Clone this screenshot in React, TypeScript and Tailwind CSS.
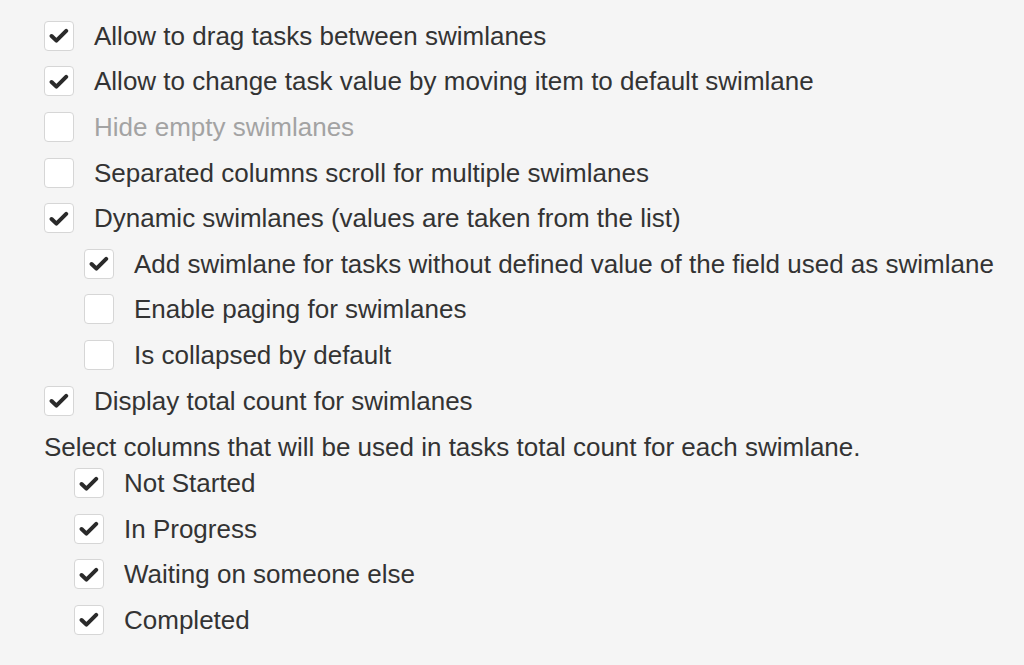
import React from 'react';

type Option = {
  label: string;
  checked: boolean;
  disabled?: boolean;
  indent?: 0 | 1 | 2;
};

const mainOptions: Option[] = [
  { label: 'Allow to drag tasks between swimlanes', checked: true },
  { label: 'Allow to change task value by moving item to default swimlane', checked: true },
  { label: 'Hide empty swimlanes', checked: false, disabled: true },
  { label: 'Separated columns scroll for multiple swimlanes', checked: false },
  { label: 'Dynamic swimlanes (values are taken from the list)', checked: true },
  { label: 'Add swimlane for tasks without defined value of the field used as swimlane', checked: true, indent: 2 },
  { label: 'Enable paging for swimlanes', checked: false, indent: 2 },
  { label: 'Is collapsed by default', checked: false, indent: 2 },
  { label: 'Display total count for swimlanes', checked: true },
];

const columnOptions: Option[] = [
  { label: 'Not Started', checked: true, indent: 1 },
  { label: 'In Progress', checked: true, indent: 1 },
  { label: 'Waiting on someone else', checked: true, indent: 1 },
  { label: 'Completed', checked: true, indent: 1 },
];

const indentClass = ['pl-[44px]', 'pl-[74px]', 'pl-[84px]'];

const CheckBox: React.FC<{ checked: boolean }> = ({ checked }) => (
  <span className="flex items-center justify-center w-[30px] h-[30px] shrink-0 bg-white border-[1.5px] border-[#d6d6d6] rounded-[4px]">
    {checked && (
      <svg width="20" height="16" viewBox="0 0 20 16" className="mt-[1px]">
        <path d="M2.6 8 L7.4 12.6 L17.2 2.8" fill="none" stroke="#2a2a2a" strokeWidth="4" strokeLinecap="round" strokeLinejoin="round" />
      </svg>
    )}
  </span>
);

const OptionRow: React.FC<{ option: Option }> = ({ option }) => (
  <label className={`flex items-center gap-[20px] h-[45.6px] ${indentClass[option.indent ?? 0]}`}>
    <CheckBox checked={option.checked} />
    <span className={option.disabled ? 'text-[#a3a3a3]' : 'text-[#333333]'}>{option.label}</span>
  </label>
);

const App: React.FC = () => {
  return (
    <div className="w-[1024px] h-[665px] bg-[#f5f5f5] overflow-hidden pt-[13px] text-[26px] leading-[26px] font-[Liberation_Sans,Arial,sans-serif]">
      {mainOptions.map((o) => (
        <OptionRow key={o.label} option={o} />
      ))}
      <p className="pl-[44px] h-[37px] pt-[11px] text-[#333333]">
        Select columns that will be used in tasks total count for each swimlane.
      </p>
      {columnOptions.map((o) => (
        <OptionRow key={o.label} option={o} />
      ))}
    </div>
  );
};

export default App;
